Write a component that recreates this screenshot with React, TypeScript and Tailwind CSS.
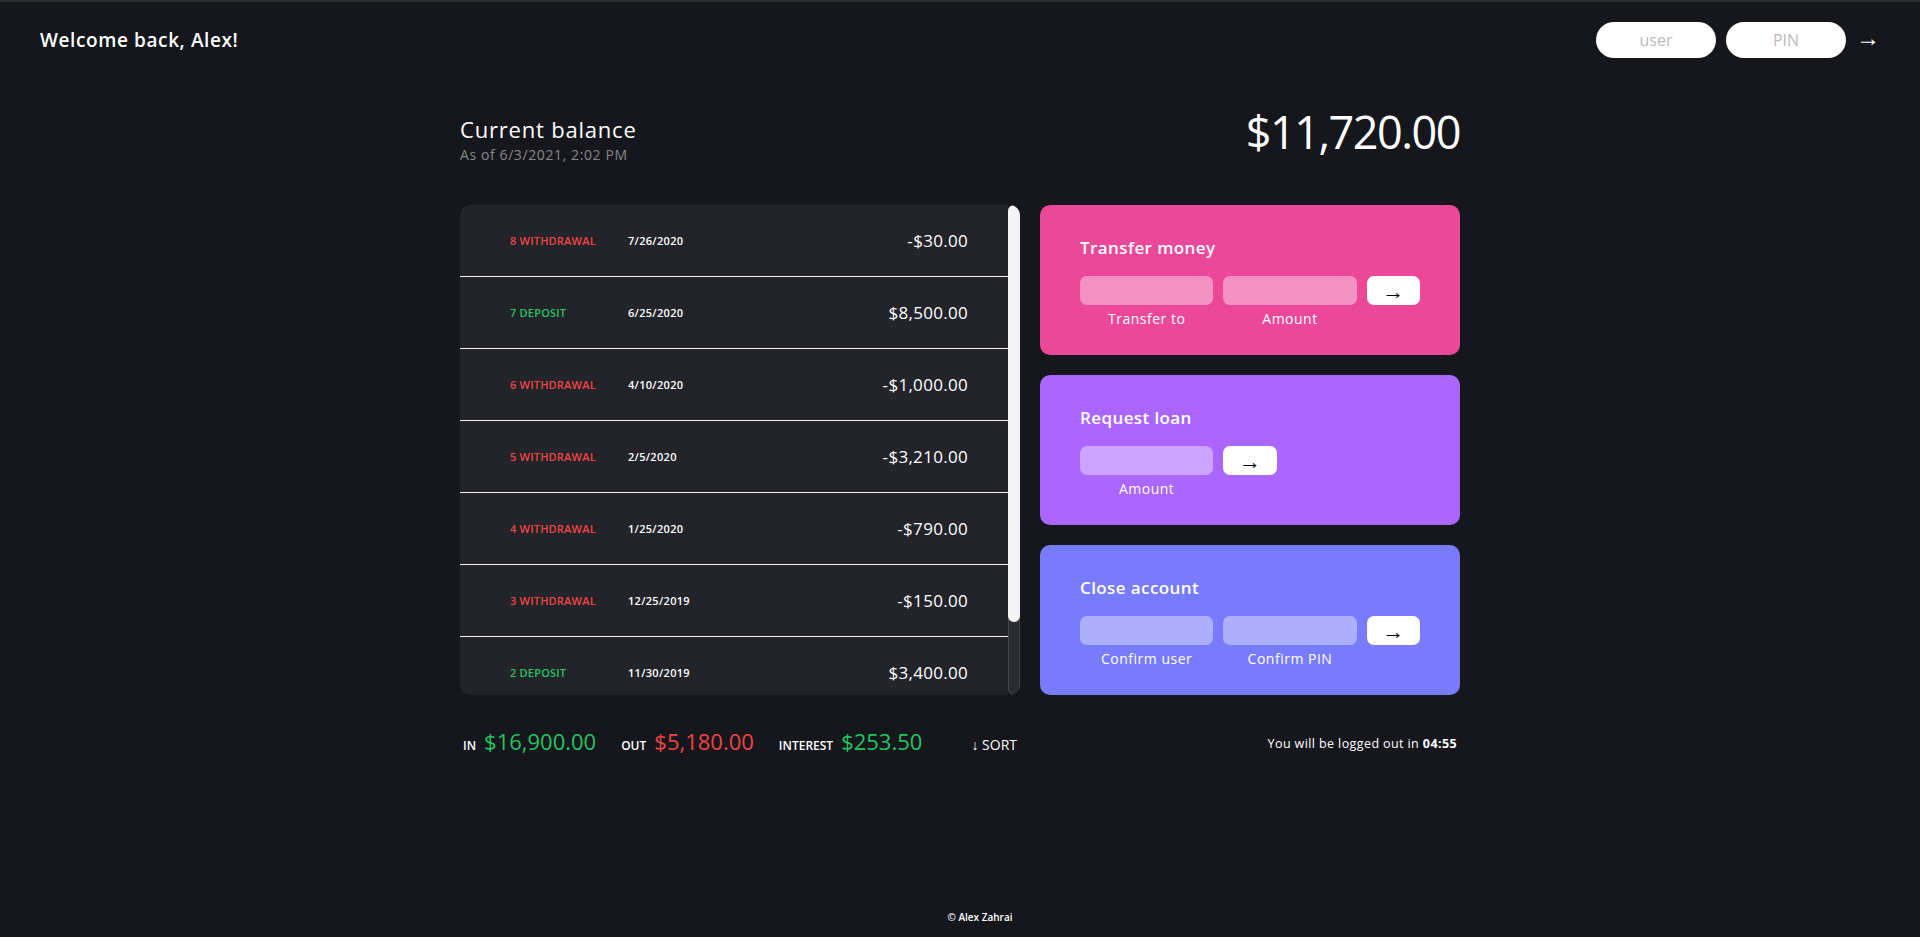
import React from 'react'

type Movement = {
  n: number
  type: 'deposit' | 'withdrawal'
  date: string
  value: string
}

const movements: Movement[] = [
  { n: 8, type: 'withdrawal', date: '7/26/2020', value: '-$30.00' },
  { n: 7, type: 'deposit', date: '6/25/2020', value: '$8,500.00' },
  { n: 6, type: 'withdrawal', date: '4/10/2020', value: '-$1,000.00' },
  { n: 5, type: 'withdrawal', date: '2/5/2020', value: '-$3,210.00' },
  { n: 4, type: 'withdrawal', date: '1/25/2020', value: '-$790.00' },
  { n: 3, type: 'withdrawal', date: '12/25/2019', value: '-$150.00' },
  { n: 2, type: 'deposit', date: '11/30/2019', value: '$3,400.00' },
  { n: 1, type: 'deposit', date: '11/18/2019', value: '$5,000.00' },
]

function MovementRow({ m }: { m: Movement }) {
  return (
    <div className="flex items-center px-10 py-[22.5px] border-b border-[#eeeeee]">
      <div
        className={
          m.type === 'deposit'
            ? 'w-[108px] shrink-0 mr-5 pl-2.5 text-[11px] leading-[16px] font-semibold tracking-[0.2px] uppercase text-[#22c55e]'
            : 'w-[108px] shrink-0 mr-5 pl-2.5 text-[11px] leading-[16px] font-semibold tracking-[0.2px] uppercase text-[#ef4444]'
        }
      >
        {m.n} {m.type}
      </div>
      <div className="text-[11px] leading-[16px] font-semibold tracking-[0.3px] text-white">{m.date}</div>
      <div className="ml-auto text-[17px] leading-[26px] tracking-[0.3px] text-white">{m.value}</div>
    </div>
  )
}

function Arrow() {
  return <span className="text-[22px] leading-none text-black">→</span>
}

export default function App() {
  return (
    <div className="min-h-screen flex flex-col bg-[#16171c] text-white border-t-2 border-[#2a2b2f] pt-5 px-5 pb-3 font-['Open_Sans',sans-serif]">
      {/* Nav */}
      <nav className="flex items-center justify-between px-5">
        <p className="text-[19px] font-semibold tracking-[0.6px]">Welcome back, Alex!</p>
        <form className="flex items-center" onSubmit={(e) => e.preventDefault()}>
          <input
            placeholder="user"
            className="w-[120px] h-9 mr-2.5 rounded-full bg-white text-center text-base text-[#444] placeholder:text-[#bbbbbb] outline-none"
          />
          <input
            placeholder="PIN"
            className="w-[120px] h-9 mr-2.5 rounded-full bg-white text-center text-base text-[#444] placeholder:text-[#bbbbbb] outline-none"
          />
          <button className="text-[24px] leading-none text-white -mt-1.5">→</button>
        </form>
      </nav>

      {/* App */}
      <main className="w-[1000px] mx-auto mt-10 grid grid-cols-[4fr_3fr] grid-rows-[auto_repeat(3,150px)_auto] gap-5">
        {/* Balance */}
        <div className="col-span-2 flex items-end justify-between mb-5">
          <div>
            <p className="text-[22px] leading-[33px] font-medium tracking-[0.8px] -mb-0.5">Current balance</p>
            <p className="text-sm leading-[21px] tracking-[0.6px] text-[#888888]">As of 6/3/2021, 2:02 PM</p>
          </div>
          <p className="text-[45px] leading-[67px] font-normal tracking-[-1.5px]">$11,720.00</p>
        </div>

        {/* Movements */}
        <div className="row-span-3 flex rounded-[10px] overflow-hidden">
          <div className="flex-1 bg-[#23242a] rounded-l-[10px] overflow-hidden">
            {movements.map((m) => (
              <MovementRow key={m.n} m={m} />
            ))}
          </div>
          <div className="w-3 rounded-full bg-[#2b2c32] shadow-[inset_0_0_0_1px_#46474d]">
            <div className="h-[417px] rounded-full bg-[#f4f4f4]" />
          </div>
        </div>

        {/* Transfer */}
        <div className="rounded-[10px] bg-[#ec4899] px-10 py-[30px]">
          <h2 className="mb-[15px] text-[17px] leading-[25.5px] font-semibold tracking-[0.4px] text-white">Transfer money</h2>
          <form className="grid grid-cols-[2.5fr_2.5fr_1fr] gap-x-2.5 gap-y-1" onSubmit={(e) => e.preventDefault()}>
            <input className="w-full h-[29px] rounded-[7px] bg-white/40 outline-none" />
            <input className="w-full h-[29px] rounded-[7px] bg-white/40 outline-none" />
            <button className="h-[29px] rounded-[7px] bg-white flex items-center justify-center">
              <Arrow />
            </button>
            <label className="text-sm leading-[19.5px] tracking-[0.5px] text-center">Transfer to</label>
            <label className="text-sm leading-[19.5px] tracking-[0.5px] text-center">Amount</label>
          </form>
        </div>

        {/* Loan */}
        <div className="rounded-[10px] bg-[#aa66fe] px-10 py-[30px]">
          <h2 className="mb-[15px] text-[17px] leading-[25.5px] font-semibold tracking-[0.4px] text-white">Request loan</h2>
          <form className="grid grid-cols-[2.5fr_1fr_2.5fr] gap-x-2.5 gap-y-1" onSubmit={(e) => e.preventDefault()}>
            <input className="w-full h-[29px] rounded-[7px] bg-white/40 outline-none" />
            <button className="h-[29px] rounded-[7px] bg-white flex items-center justify-center">
              <Arrow />
            </button>
            <label className="row-start-2 text-sm leading-[19.5px] tracking-[0.5px] text-center">Amount</label>
          </form>
        </div>

        {/* Close */}
        <div className="rounded-[10px] bg-[#787bfb] px-10 py-[30px]">
          <h2 className="mb-[15px] text-[17px] leading-[25.5px] font-semibold tracking-[0.4px] text-white">Close account</h2>
          <form className="grid grid-cols-[2.5fr_2.5fr_1fr] gap-x-2.5 gap-y-1" onSubmit={(e) => e.preventDefault()}>
            <input className="w-full h-[29px] rounded-[7px] bg-white/40 outline-none" />
            <input className="w-full h-[29px] rounded-[7px] bg-white/40 outline-none" />
            <button className="h-[29px] rounded-[7px] bg-white flex items-center justify-center">
              <Arrow />
            </button>
            <label className="text-sm leading-[19.5px] tracking-[0.5px] text-center">Confirm user</label>
            <label className="text-sm leading-[19.5px] tracking-[0.5px] text-center">Confirm PIN</label>
          </form>
        </div>

        {/* Summary */}
        <div className="flex items-baseline px-[3px] mt-2.5">
          <span className="mr-2 text-xs leading-[18px] font-semibold uppercase">In</span>
          <span className="mr-[25px] text-[22px] leading-[33px] text-[#22c55e]">$16,900.00</span>
          <span className="mr-2 text-xs leading-[18px] font-semibold uppercase">Out</span>
          <span className="mr-[25px] text-[22px] leading-[33px] text-[#ef4444]">$5,180.00</span>
          <span className="mr-2 text-xs leading-[18px] font-semibold uppercase">Interest</span>
          <span className="mr-[25px] text-[22px] leading-[33px] text-[#22c55e]">$253.50</span>
          <button className="ml-auto text-sm leading-[20px] font-medium text-white">↓ SORT</button>
        </div>

        {/* Logout timer */}
        <p className="px-[3px] mt-[19px] text-right text-[12.5px] leading-[19px] tracking-[0.4px]">
          You will be logged out in <span className="font-bold">04:55</span>
        </p>
      </main>

      <footer className="mt-auto pl-10 text-center text-[10px] leading-[15px] font-semibold">© Alex Zahrai</footer>
    </div>
  )
}
